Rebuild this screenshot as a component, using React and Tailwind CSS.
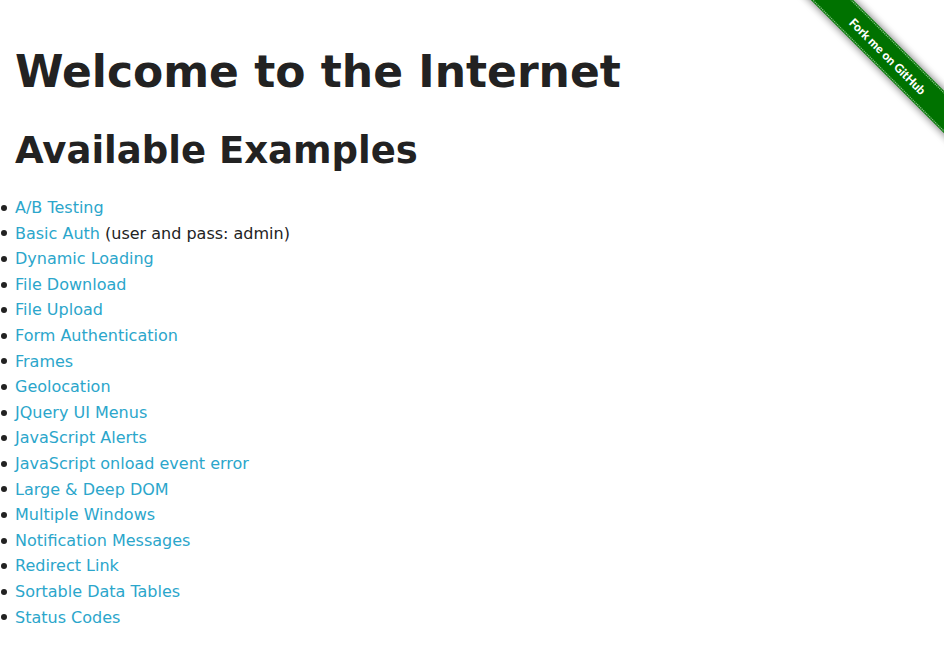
const examples = [
  { name: 'A/B Testing' },
  { name: 'Basic Auth', note: '(user and pass: admin)' },
  { name: 'Dynamic Loading' },
  { name: 'File Download' },
  { name: 'File Upload' },
  { name: 'Form Authentication' },
  { name: 'Frames' },
  { name: 'Geolocation' },
  { name: 'JQuery UI Menus' },
  { name: 'JavaScript Alerts' },
  { name: 'JavaScript onload event error' },
  { name: 'Large & Deep DOM' },
  { name: 'Multiple Windows' },
  { name: 'Notification Messages' },
  { name: 'Redirect Link' },
  { name: 'Sortable Data Tables' },
  { name: 'Status Codes' },
];

function ForkRibbon() {
  return (
    <a href="#fork" className="absolute right-0 top-0 block size-[149px] overflow-hidden">
      <svg viewBox="0 0 149 149" className="size-full" aria-label="Fork me on GitHub">
        <defs>
          <filter id="shadow" x="-20%" y="-50%" width="140%" height="200%">
            <feDropShadow dx="0" dy="0" stdDeviation="4" floodColor="#000" floodOpacity="0.6" />
          </filter>
        </defs>
        <g transform="translate(93 56) rotate(45)">
          <rect x="-130" y="-15" width="260" height="30" fill="#007200" filter="url(#shadow)" />
          <path d="M-130 -13.5H130M-130 13.5H130" stroke="#7fbb7f" strokeWidth="1.2" strokeDasharray="1.4 0.7" fill="none" />
          <text x="0" y="5" textAnchor="middle" fill="#fff" className="font-['Lato',sans-serif] text-[12px] font-black">
            Fork me on GitHub
          </text>
        </g>
      </svg>
    </a>
  );
}

export default function App() {
  return (
    <div className="relative min-h-screen overflow-hidden bg-white font-['DejaVu_Sans',sans-serif] text-[#222222]">
      <ForkRibbon />
      <main className="px-[15px] pt-[41px]">
        <h1 className="text-[44px] font-bold leading-[62px]">Welcome to the Internet</h1>
        <h2 className="mt-[22px] text-[37px] font-bold leading-[52px]">Available Examples</h2>
        <ul className="-ml-[14px] mt-[18px] text-base leading-[1.6]">
          {examples.map(({ name, note }) => (
            <li
              key={name}
              className="flex items-center before:mr-2 before:size-[6px] before:rounded-full before:bg-[#222222]"
            >
              <span>
                <a href="#example" className="text-[#2ba6cb]">{name}</a>
                {note && ` ${note}`}
              </span>
            </li>
          ))}
        </ul>
      </main>
    </div>
  );
}
